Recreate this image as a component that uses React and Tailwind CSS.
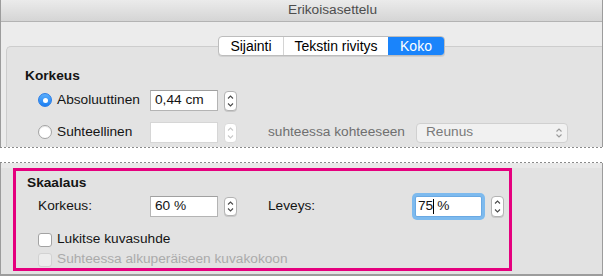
import React from 'react';

const font = "font-['Liberation_Sans',Arial,sans-serif]";

function Stepper({ disabled = false, h = 'h-[20px]' }) {
  const stroke = disabled ? '#c8c8c8' : '#4a4a4a';
  return (
    <div
      className={`${h} w-[13px] rounded-[4px] border bg-white flex flex-col items-center justify-between py-[3px] ${
        disabled ? 'border-[#dadada]' : 'border-[#b3b3b3] shadow-[0_1px_0_#c8c8c8]'
      }`}
    >
      <svg width="7" height="4" viewBox="0 0 7 4">
        <path d="M1 3.5 L3.5 1 L6 3.5" fill="none" stroke={stroke} strokeWidth="1.1" />
      </svg>
      <svg width="7" height="4" viewBox="0 0 7 4">
        <path d="M1 0.5 L3.5 3 L6 0.5" fill="none" stroke={stroke} strokeWidth="1.1" />
      </svg>
    </div>
  );
}

function Radio({ checked }) {
  return checked ? (
    <div className="w-[14px] h-[14px] rounded-full bg-[linear-gradient(#5aaefc,#1b7ff2)] border border-[#2a7de6] flex items-center justify-center">
      <div className="w-[5px] h-[5px] rounded-full bg-white" />
    </div>
  ) : (
    <div className="w-[14px] h-[14px] rounded-full bg-white border border-[#a3a3a3] shadow-[inset_0_1px_0_#e8e8e8]" />
  );
}

function Checkbox({ disabled = false }) {
  return (
    <div
      className={`w-[14px] h-[14px] rounded-[3px] border ${
        disabled ? 'bg-[#ececec] border-[#d2d2d2]' : 'bg-white border-[#a3a3a3]'
      }`}
    />
  );
}

export default function App() {
  return (
    <div className={`w-[603px] h-[276px] overflow-hidden text-[13.7px] text-[#141414] ${font}`}>
      {/* upper part of the window */}
      <div className="h-[147px] flex flex-col border-x border-[#9c9c9c] bg-[#ececec]">
        <div className="h-[22px] shrink-0 flex items-center pl-[287px] border-b border-[#b3b3b3] bg-[linear-gradient(#ebebeb,#d5d5d5)] text-[#4d4d4d]">
          Erikoisasettelu
        </div>

        <div className="relative z-10 mt-[14px] ml-[217px] flex h-[20px] w-[227px] shrink-0 overflow-hidden rounded-[4px] border border-[#bdbdbd] bg-white text-[14px] text-black shadow-[0_1px_0_#d0d0d0]">
          <div className="w-[64px] flex items-center justify-center">Sijainti</div>
          <div className="w-[105px] flex items-center justify-center border-l border-[#d4d4d4]">Tekstin rivitys</div>
          <div className="flex-1 flex items-center justify-center bg-[#1a84fb] text-white">Koko</div>
        </div>

        <div className="mt-[-10px] ml-[5px] flex-1 rounded-tl-[5px] border-t border-l border-[#cdcdcd] bg-[#e3e3e3]">
          <div className="mt-[20px] pl-[18px] h-[18px] flex items-center font-bold">Korkeus</div>

          <div className="mt-[5px] h-[21px] flex items-center pl-[31px]">
            <div className="w-[112px] flex items-center gap-[5px]">
              <Radio checked />
              <span>Absoluuttinen</span>
            </div>
            <div className="w-[68px] h-[21px] border border-[#b4b4b4] border-t-[#a0a0a0] bg-white flex items-center pl-[4px]">
              0,44 cm
            </div>
            <div className="ml-[6px]">
              <Stepper />
            </div>
          </div>

          <div className="mt-[11px] h-[21px] flex items-center pl-[31px]">
            <div className="w-[112px] flex items-center gap-[5px]">
              <Radio />
              <span>Suhteellinen</span>
            </div>
            <div className="w-[68px] h-[21px] border border-[#d6d6d6] bg-white" />
            <div className="ml-[6px]">
              <Stepper disabled />
            </div>
            <span className="ml-[31px] text-[#6f6f6f]">suhteessa kohteeseen</span>
            <div className="ml-[11px] w-[152px] h-[20px] rounded-[4px] border border-[#d0d0d0] bg-[#f1f1f1] flex items-center justify-between pl-[9px] pr-[4px] text-[#7a7a7a]">
              <span>Reunus</span>
              <svg width="8" height="12" viewBox="0 0 8 12">
                <path d="M1.5 4.5 L4 2 L6.5 4.5 M1.5 7.5 L4 10 L6.5 7.5" fill="none" stroke="#9a9a9a" strokeWidth="1.1" />
              </svg>
            </div>
          </div>
        </div>
      </div>

      {/* torn edge */}
      <div className="h-px bg-[repeating-linear-gradient(90deg,#8a8a8a_0_2px,transparent_2px_4px)] bg-white" />
      <div className="h-[14px] bg-white" />
      <div className="h-px bg-[repeating-linear-gradient(90deg,#8a8a8a_0_2px,transparent_2px_4px)] bg-white" />

      {/* lower part of the window */}
      <div className="h-[113px] border-x border-b-2 border-[#9c9c9c] bg-[linear-gradient(#e9e9e9_0_5px,#e2e2e2_5px)] pt-[5px]">
        <div className="ml-[12px] w-[499px] h-[103px] border-[3px] border-[#e5007e]">
          <div className="mt-[3px] pl-[11px] h-[18px] flex items-center font-bold">Skaalaus</div>

          <div className="mt-[4px] h-[21px] flex items-center pl-[22px]">
            <div className="w-[112px]">Korkeus:</div>
            <div className="w-[68px] h-[21px] border border-[#b4b4b4] border-t-[#a0a0a0] bg-white flex items-center pl-[4px]">
              60 %
            </div>
            <div className="ml-[6px]">
              <Stepper h="h-[19px]" />
            </div>
            <div className="ml-[31px] w-[147px]">Leveys:</div>
            <div className="w-[67px] h-[21px] rounded-[2px] border border-[#6aa9e3] bg-white shadow-[0_0_0_3px_#7dbaee] flex items-center pl-[2px]">
              <span>75</span>
              <span className="w-px h-[15px] bg-black" />
              <span className="ml-[3px]">%</span>
            </div>
            <div className="ml-[9px]">
              <Stepper h="h-[21px]" />
            </div>
          </div>

          <div className="mt-[14px] h-[17px] flex items-center pl-[22px] gap-[5px]">
            <Checkbox />
            <span>Lukitse kuvasuhde</span>
          </div>
          <div className="mt-[3px] h-[17px] flex items-center pl-[22px] gap-[5px] text-[#ababab]">
            <Checkbox disabled />
            <span>Suhteessa alkuperäiseen kuvakokoon</span>
          </div>
        </div>
      </div>
    </div>
  );
}
